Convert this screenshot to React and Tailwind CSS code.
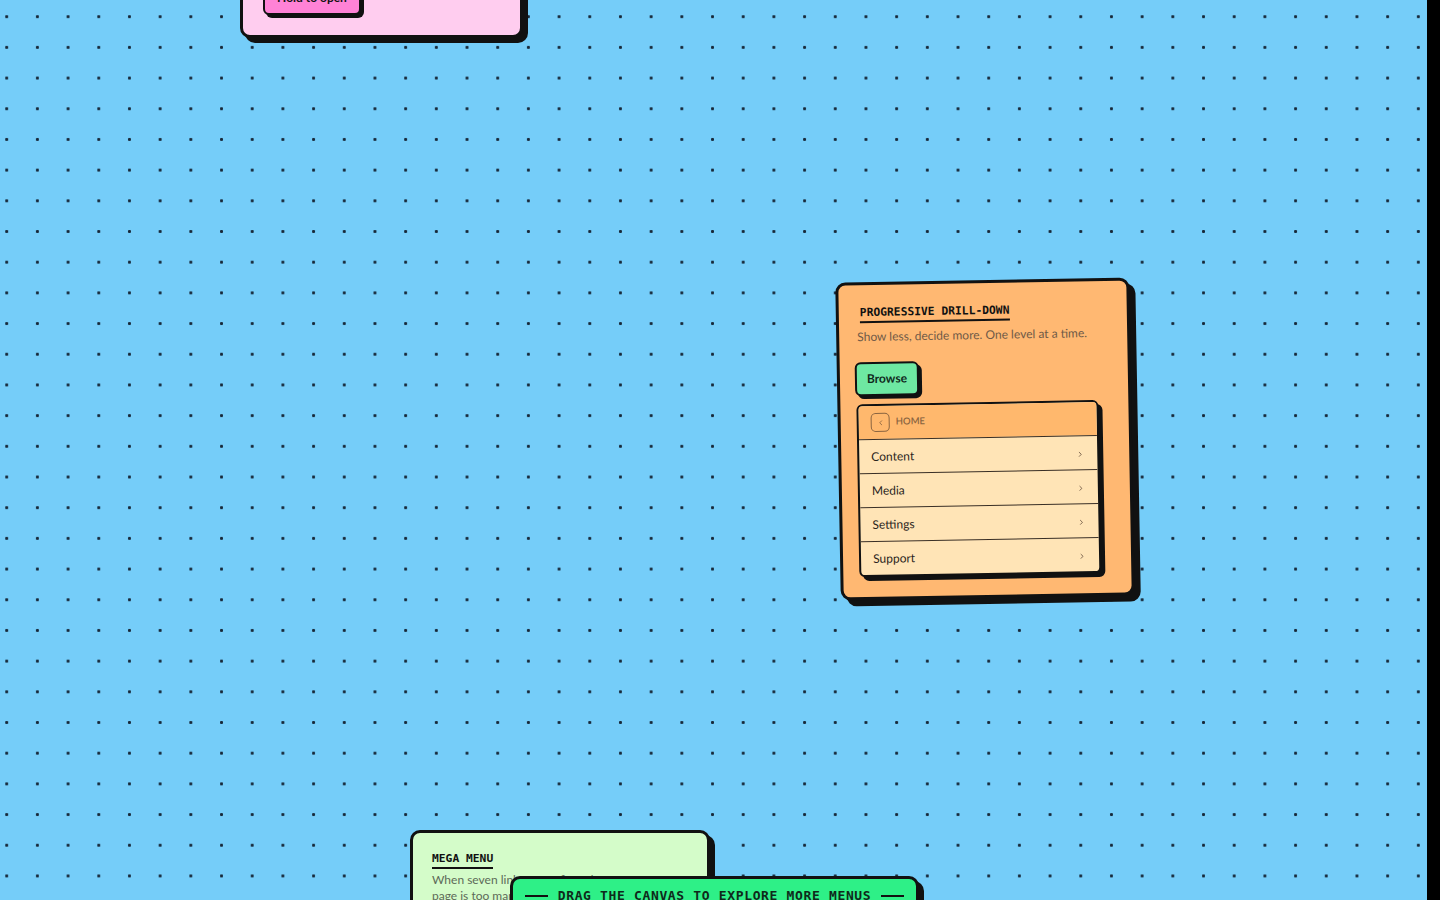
import { ChevronLeft, ChevronRight } from "lucide-react";

const sans = { fontFamily: "Lato, 'Open Sans', sans-serif" };
const mono = { fontFamily: "'DejaVu Sans Mono', 'Liberation Mono', monospace" };

const drillItems = ["Content", "Media", "Settings", "Support"];

function CardTitle({ children, className = "" }) {
  return (
    <div
      style={mono}
      className={`block w-fit border-b-2 border-[#111] pb-px text-[11.3px] font-bold leading-[14px] text-[#111] ${className}`}
    >
      {children}
    </div>
  );
}

// pink card that sits mostly above the viewport
function HoldCard() {
  return (
    <div className="absolute left-[240px] top-[-152px] h-[190px] w-[283px] rounded-[10px] border-[3px] border-[#111] bg-[#ffcdef] px-5 pb-[20px] pt-5 shadow-[5px_5px_0_#111] flex flex-col">
      <CardTitle>PRESS &amp; HOLD</CardTitle>
      <p style={sans} className="mt-2 text-[12px] text-[#6e5566]">
        Long-press to reveal quick actions.
      </p>
      <div className="mt-auto">
        <button
          style={sans}
          className="h-[34px] w-[98px] rounded-[6px] border-[2.5px] border-[#111] bg-[#ff82d6] text-[12px] font-bold text-[#111] shadow-[3px_3px_0_#111]"
        >
          Hold to open
        </button>
      </div>
    </div>
  );
}

function DrillCard() {
  return (
    <div className="absolute left-[838px] top-[280px] w-[294px] -rotate-1 rounded-[10px] border-[3px] border-[#111] bg-[#ffb872] pb-[20px] pl-[18px] pr-[19px] pt-[21px] shadow-[6px_6px_0_#111]">
      <CardTitle className="ml-[3px]">PROGRESSIVE DRILL-DOWN</CardTitle>
      <p style={sans} className="mt-[6px] text-[12px] leading-[16px] text-[#6f5a47]">
        Show less, decide more. One level at a time.
      </p>

      <button
        style={sans}
        className="-ml-[3px] mt-[17px] h-[34px] w-[64px] rounded-[6px] border-[2.5px] border-[#111] bg-[#6ee8a2] text-[12px] font-bold text-[#10291c] shadow-[3px_3px_0_#111]"
      >
        Browse
      </button>

      <div className="-ml-[2px] mt-[8px] w-[242px] overflow-hidden rounded-[6px] border-[2.5px] border-[#111] bg-[#ffe4b6] shadow-[4px_4px_0_#111]">
        <div className="flex h-[33px] items-center gap-[6px] bg-[#ffb86d] px-[12px]">
          <span className="flex h-[19px] w-[19px] items-center justify-center rounded-[5px] border-[1.5px] border-[#8a6440]">
            <ChevronLeft size={8} strokeWidth={2.5} className="text-[#8a6440]" />
          </span>
          <span style={sans} className="text-[9.5px] font-semibold text-[#8a6440]">
            HOME
          </span>
        </div>
        {drillItems.map((item) => (
          <div
            key={item}
            className="flex h-[34px] items-center justify-between border-t-[1.5px] border-[#3a2f26] pl-[12px] pr-[13px]"
          >
            <span style={sans} className="text-[12px] text-[#2a2420]">
              {item}
            </span>
            <ChevronRight size={8} strokeWidth={2.5} className="mt-[3px] text-[#6a5440]" />
          </div>
        ))}
      </div>
    </div>
  );
}

function MegaCard() {
  return (
    <div className="absolute left-[410px] top-[830px] h-[140px] w-[300px] rounded-[10px] border-[3px] border-[#111] bg-[#d4fcc9] px-[19px] pt-[19px] shadow-[5px_5px_0_#111]">
      <CardTitle>MEGA MENU</CardTitle>
      <p style={sans} className="mt-[3px] text-[12px] leading-[16px] text-[#5d6a58]">
        When seven links won't fit and a
        <br />
        page is too many clicks away.
      </p>
    </div>
  );
}

function DragBanner() {
  return (
    <div className="absolute left-[510px] top-[876px] flex h-[52px] w-[409px] items-start justify-center gap-[10px] rounded-[10px] border-[3px] border-[#111] bg-[#2ef087] pt-[7px] shadow-[5px_5px_0_#111]">
      <span className="mt-[9px] h-[2px] w-[23px] bg-[#111]" />
      <span style={mono} className="text-[13px] font-bold tracking-[0.05em] text-[#0f2a1b]">
        DRAG THE CANVAS TO EXPLORE MORE MENUS
      </span>
      <span className="mt-[9px] h-[2px] w-[23px] bg-[#111]" />
    </div>
  );
}

export default function App() {
  return (
    <div className="flex h-[900px] w-[1440px] overflow-hidden">
      {/* dotted canvas */}
      <div className="relative h-full w-[1427px] overflow-hidden bg-[#75cdf9] bg-[radial-gradient(circle,#17293a_1.3px,transparent_1.7px)] [background-size:30.7px_30.7px] [background-position:-8.65px_1.35px]">
        <HoldCard />
        <DrillCard />
        <MegaCard />
        <DragBanner />
      </div>
      {/* scrollbar gutter */}
      <div className="h-full flex-1 bg-black" />
    </div>
  );
}
